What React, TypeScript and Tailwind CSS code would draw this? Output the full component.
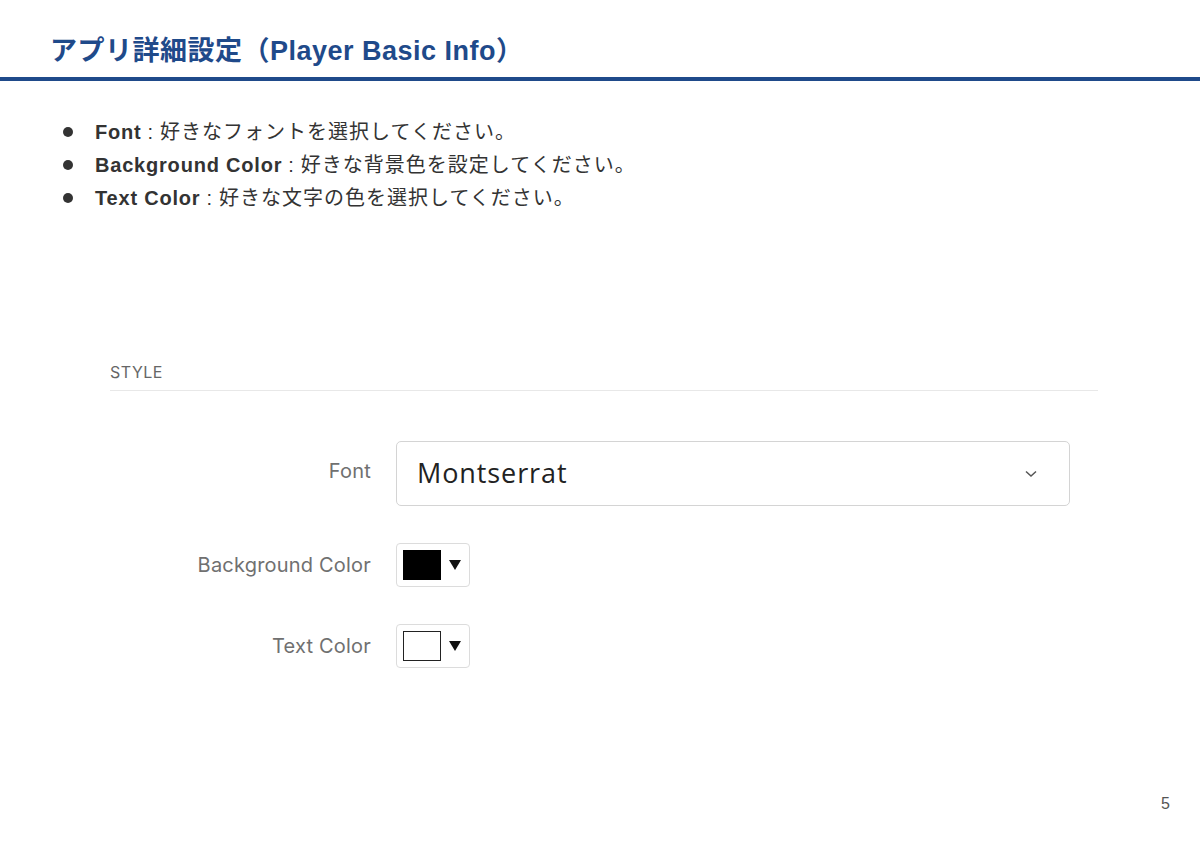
const jp = "font-['Liberation_Sans','Noto_Sans_CJK_JP',sans-serif]";

function Bullet({ term, desc }: { term: string; desc: string }) {
  return (
    <li className="flex items-center h-[33px]">
      <span className="w-[10px] h-[10px] rounded-full bg-[#333] ml-[63px] mr-[22px]" />
      <span className="font-bold tracking-[0.8px]">{term}</span>
      <span className="ml-[6px] mr-[7px]">:</span>
      <span className="tracking-[1px]">{desc}</span>
    </li>
  );
}

function ColorPicker({ color }: { color: "black" | "white" }) {
  return (
    <div className="w-[74px] h-[44px] border border-[#dcdcdc] rounded-[4px] bg-white flex items-center pl-[6px] gap-[8px]">
      <div
        className={
          color === "black"
            ? "w-[38px] h-[30px] bg-black"
            : "w-[38px] h-[30px] bg-white border border-[#222]"
        }
      />
      <svg width="12" height="10" viewBox="0 0 12 10">
        <path d="M0 0 L12 0 L6 10 Z" fill="#111" />
      </svg>
    </div>
  );
}

function Row({ label, children }: { label: string; children: React.ReactNode }) {
  return (
    <div className="flex items-center">
      <div className="w-[371px] text-right text-[20px] tracking-[0.2px] text-[#707070] font-['Inter',sans-serif]">
        {label}
      </div>
      <div className="ml-[25px]">{children}</div>
    </div>
  );
}

export default function App() {
  return (
    <div className={`w-[1200px] h-[849px] bg-white relative ${jp}`}>
      <div className="h-[81px] border-b-[4px] border-[#1f4a8a] flex items-end pb-[6px] pl-[50px]">
        <h1 className="text-[27px] font-bold text-[#1f4a8a] tracking-[0.5px]">
          アプリ詳細設定（Player Basic Info）
        </h1>
      </div>

      <ul className="mt-[34px] text-[20px] text-[#333] leading-none">
        <Bullet term="Font" desc="好きなフォントを選択してください。" />
        <Bullet term="Background Color" desc="好きな背景色を設定してください。" />
        <Bullet term="Text Color" desc="好きな文字の色を選択してください。" />
      </ul>

      <div className="mt-[146px] ml-[110px] w-[988px]">
        <div className="text-[16px] text-[#666] font-['Inter',sans-serif] pb-[6px] border-b border-[#e8e8e8] tracking-[0.5px]">
          STYLE
        </div>
      </div>

      <div className="mt-[44px] flex flex-col gap-[37px]">
        <Row label="Font">
          <div className="w-[674px] h-[65px] border border-[#d4d4d4] rounded-[5px] flex items-center justify-between pl-[20px] pr-[32px] mt-[6px]">
            <span className="text-[27px] text-[#222] font-['Open_Sans',sans-serif] tracking-[0.9px]">
              Montserrat
            </span>
            <svg width="12" height="8" viewBox="0 0 12 8">
              <path d="M1 1.5 L6 6 L11 1.5" fill="none" stroke="#555" strokeWidth="1.5" />
            </svg>
          </div>
        </Row>
        <Row label="Background Color">
          <ColorPicker color="black" />
        </Row>
        <Row label="Text Color">
          <ColorPicker color="white" />
        </Row>
      </div>

      <div className="absolute right-[30px] bottom-[33px] text-[16px] text-[#555] font-['Liberation_Sans',sans-serif]">
        5
      </div>
    </div>
  );
}
